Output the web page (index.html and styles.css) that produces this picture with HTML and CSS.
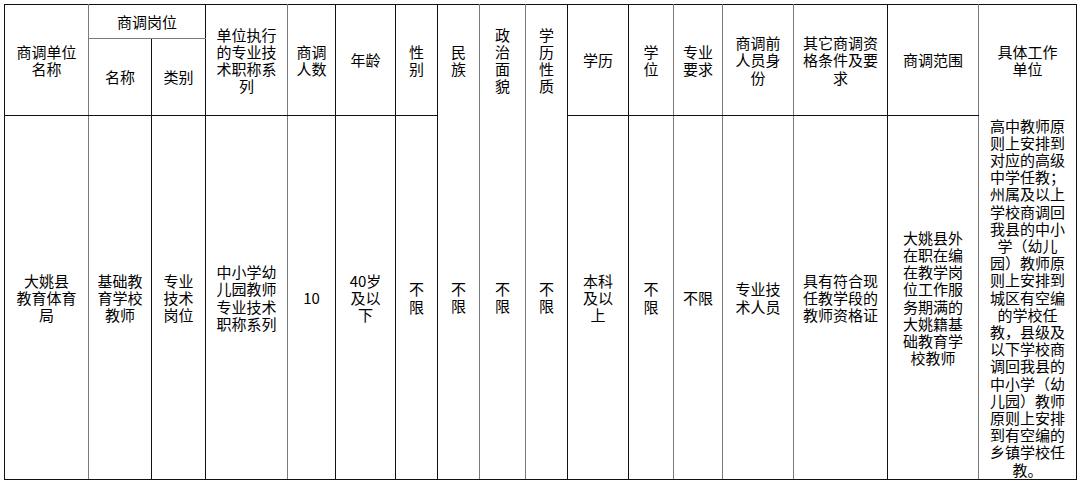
FILE: index.html
```html
<!DOCTYPE html>
<html lang="zh-CN">
<head>
<meta charset="utf-8">
<title>商调岗位表</title>
<link rel="stylesheet" href="styles.css">
</head>
<body>
<table class="grid">
  <colgroup>
    <col class="w84"><col class="w63"><col class="w54"><col class="w82"><col class="w48"><col class="w60">
    <col class="w42"><col class="w42"><col class="w46"><col class="w42"><col class="w61"><col class="w45">
    <col class="w49"><col class="w71"><col class="w94"><col class="w91"><col class="w98">
  </colgroup>
  <tr class="r1">
    <th rowspan="2" class="s">商调单位<br>名称</th>
    <th colspan="2" class="sb">商调岗位</th>
    <th rowspan="2" class="s">单位执行<br>的专业技<br>术职称系<br>列</th>
    <th rowspan="2">商调<br>人数</th>
    <th rowspan="2">年龄</th>
    <th rowspan="2">性<br>别</th>
    <th rowspan="2" class="s open">民<br>族</th>
    <th rowspan="2" class="s open">政<br>治<br>面<br>貌</th>
    <th rowspan="2" class="open">学<br>历<br>性<br>质</th>
    <th rowspan="2">学历</th>
    <th rowspan="2" class="s">学<br>位</th>
    <th rowspan="2" class="s">专业<br>要求</th>
    <th rowspan="2" class="s">商调前<br>人员身<br>份</th>
    <th rowspan="2">其它商调资<br>格条件及要<br>求</th>
    <th rowspan="2" class="s">商调范围</th>
    <th rowspan="2" class="open">具体工作<br>单位</th>
  </tr>
  <tr class="r2">
    <th>名称</th>
    <th>类别</th>
  </tr>
  <tr class="r3">
    <td class="s">大姚县<br>教育体育<br>局</td>
    <td>基础教<br>育学校<br>教师</td>
    <td>专业<br>技术<br>岗位</td>
    <td class="s">中小学幼<br>儿园教师<br>专业技术<br>职称系列</td>
    <td>10</td>
    <td>40岁<br>及以<br>下</td>
    <td>不<br>限</td>
    <td class="s shut">不<br>限</td>
    <td class="s shut">不<br>限</td>
    <td class="shut">不<br>限</td>
    <td>本科<br>及以<br>上</td>
    <td class="s">不<br>限</td>
    <td class="s">不限</td>
    <td class="s">专业技<br>术人员</td>
    <td>具有符合现<br>任教学段的<br>教师资格证</td>
    <td class="s">大姚县外<br>在职在编<br>在教学岗<br>位工作服<br>务期满的<br>大姚籍基<br>础教育学<br>校教师</td>
    <td class="shut">高中教师原<br>则上安排到<br>对应的高级<br>中学任教；<br>州属及以上<br>学校商调回<br>我县的中小<br>学（幼儿<br>园）教师原<br>则上安排到<br>城区有空编<br>的学校任<br>教，县级及<br>以下学校商<br>调回我县的<br>中小学（幼<br>儿园）教师<br>原则上安排<br>到有空编的<br>乡镇学校任<br>教。</td>
  </tr>
</table>
</body>
</html>
```

FILE: styles.css
```css
html, body {
  margin: 0;
  padding: 0;
  background: #ffffff;
}

body {
  font-family: "Noto Sans CJK SC", "Noto Sans", sans-serif;
  color: #000000;
}

.grid {
  margin: 4px 0 0 4px;
  width: 1073px;
  table-layout: fixed;
  border-collapse: collapse;
  font-size: 15px;
  line-height: 17.2px;
}

.w84 { width: 84px; }
.w63 { width: 63px; }
.w54 { width: 54px; }
.w82 { width: 82px; }
.w48 { width: 48px; }
.w60 { width: 60px; }
.w42 { width: 42px; }
.w46 { width: 46px; }
.w61 { width: 61px; }
.w45 { width: 45px; }
.w49 { width: 49px; }
.w71 { width: 71px; }
.w94 { width: 94px; }
.w91 { width: 91px; }
.w98 { width: 98px; }

.grid th,
.grid td {
  border: 1px solid #111111;
  padding: 0;
  text-align: center;
  vertical-align: middle;
  white-space: nowrap;
  font-weight: normal;
}

.grid .s {
  border-right-color: #7a7a7a;
}

.grid .sb {
  border-bottom-color: #7a7a7a;
}

.grid .open {
  border-bottom-style: hidden;
}

.grid .shut {
  border-top-style: hidden;
}

.r1 { height: 34px; }
.r2 { height: 77px; }
.r3 { height: 364px; }
```
